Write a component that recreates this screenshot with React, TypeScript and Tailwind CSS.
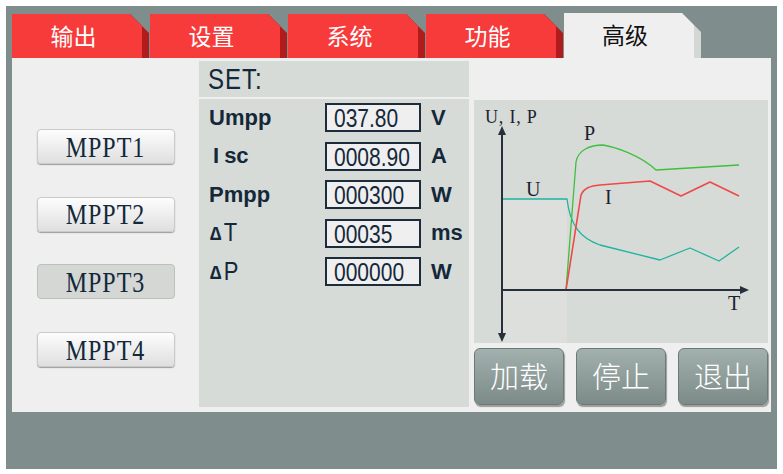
import React from "react";

const TABS = [
  { label: "输出", active: false },
  { label: "设置", active: false },
  { label: "系统", active: false },
  { label: "功能", active: false },
  { label: "高级", active: true },
];

const MPPTS = [
  { label: "MPPT1", selected: false },
  { label: "MPPT2", selected: false },
  { label: "MPPT3", selected: true },
  { label: "MPPT4", selected: false },
];

const ROWS = [
  { label: "Umpp", value: "037.80", unit: "V" },
  { label: "Isc", value: "0008.90", unit: "A" },
  { label: "Pmpp", value: "000300", unit: "W" },
  { label: "∆T", value: "00035", unit: "ms" },
  { label: "∆P", value: "000000", unit: "W" },
];

const CJK = "font-['Noto_Sans_CJK_SC',sans-serif]";

function Tab(props: { label: string; active: boolean }) {
  const { label, active } = props;
  return (
    <div
      className={
        active
          ? "h-[45px] w-[137px] bg-[#d3d8d5] [clip-path:polygon(0_0,118px_0,137px_19px,137px_100%,0_100%)]"
          : "mt-[1px] h-[44px] w-[137px] bg-[#b21b1b] [clip-path:polygon(0_0,118px_0,137px_19px,137px_100%,0_100%)]"
      }
    >
      <div
        className={
          active
            ? `flex h-full w-[130px] items-center justify-center bg-[#efefef] pb-[3px] pr-[8px] text-[23px] text-[#111] ${CJK} [clip-path:polygon(0_0,118px_0,130px_12px,130px_100%,0_100%)]`
            : `flex h-full w-[130px] items-center justify-center bg-[#f73a3a] pb-[2px] pr-[7px] text-[23px] text-white ${CJK} [clip-path:polygon(0_0,118px_0,130px_12px,130px_100%,0_100%)]`
        }
      >
        {label}
      </div>
    </div>
  );
}

function MpptButton(props: { label: string; selected: boolean }) {
  const { label, selected } = props;
  return (
    <div
      className={
        selected
          ? "flex h-[35px] w-[138px] items-center justify-center rounded-[4px] border border-[#bcc0bc] bg-[#d4d7d4] font-['Liberation_Serif',serif] text-[24px] tracking-[1px] text-[#13283a]"
          : "flex h-[35px] w-[138px] items-center justify-center rounded-[4px] border border-[#c9cbc9] bg-gradient-to-b from-[#fdfdfd] to-[#dedfde] font-['Liberation_Serif',serif] text-[24px] tracking-[1px] text-[#13283a] shadow-[0_1px_1px_rgba(0,0,0,0.35)]"
      }
    >
      <span className="inline-block scale-y-[1.2]">{label}</span>
    </div>
  );
}

function ParamRow(props: { label: string; value: string; unit: string }) {
  const { label, value, unit } = props;
  return (
    <div className="flex h-[29px] items-center font-['Liberation_Sans',sans-serif] text-[#14283a]">
      <div className="w-[116px] text-[22px] font-bold leading-none">
        {label === "Isc" ? (
          <span className="pl-[4px]">
            I<span className="ml-[5px]">sc</span>
          </span>
        ) : label.startsWith("∆") ? (
          <span className="pl-[1px] font-normal">
            <span className="mr-[2px] text-[19px] font-bold">∆</span>
            <span className="inline-block scale-y-[1.15]">{label.slice(1)}</span>
          </span>
        ) : (
          label
        )}
      </div>
      <div className="flex h-[29px] w-[96px] items-center border-2 border-[#1d2c3b] bg-[#efefef] pl-[7px] text-[21px] leading-none">
        <span className="inline-block scale-y-[1.25]">{value}</span>
      </div>
      <div className="ml-[10px] text-[22px] font-bold leading-none">{unit}</div>
    </div>
  );
}

function Chart() {
  return (
    <svg width="294" height="243" viewBox="474 100 294 243" className="block">
      <rect x="502" y="199" width="65" height="144" fill="#dcdfdc" />
      <g fill="none" strokeWidth="1.3" strokeLinejoin="round">
        <path d="M502 199 H567 C570 225 580 238 600 245 L660 260 L690 248 L719 261 L739 247" stroke="#1eb3a0" />
        <path d="M566 290 L576 162 C578 150 590 145 603 145 C615 147 640 155 656 170 L739 165" stroke="#3fbf3f" />
        <path d="M566 290 L581 195 C584 188 590 186 600 185 L650 181 L681 196 L710 182 L739 196" stroke="#f04848" strokeWidth="1.6" />
      </g>
      <g stroke="#26303a" strokeWidth="2">
        <line x1="502" y1="132" x2="502" y2="336" />
        <line x1="502" y1="290" x2="743" y2="290" />
      </g>
      <g fill="#26303a">
        <polygon points="502,126 498,135 506,135" />
        <polygon points="502,342 498,333 506,333" />
        <polygon points="749,290 740,286 740,294" />
      </g>
      <g fill="#1a2230" fontFamily="'Liberation Serif', serif">
        <text x="485" y="123" fontSize="18" letterSpacing="0.8">U, I, P</text>
        <text x="584" y="140" fontSize="20">P</text>
        <text x="526" y="196" fontSize="20">U</text>
        <text x="605" y="204" fontSize="20">I</text>
        <text x="728" y="310" fontSize="20">T</text>
      </g>
    </svg>
  );
}

function ActionButton(props: { label: string }) {
  return (
    <div
      className={`flex h-[57px] w-[90px] items-center justify-center rounded-[6px] border border-[#6c7a77] bg-gradient-to-b from-[#a3b1ae] to-[#7d8b88] pb-[2px] text-[29px] font-light text-white shadow-[1px_2px_1px_rgba(0,0,0,0.35)] ${CJK}`}
    >
      {props.label}
    </div>
  );
}

export default function App() {
  return (
    <div className="h-[474px] w-[783px] bg-white pl-[6px] pt-[6px]">
      <div className="flex h-[463px] w-[771px] flex-col bg-[#7f8d8c] pl-[6px] pt-[7px]">
        <div className="flex gap-[1px]">
          {TABS.map((t) => (
            <Tab key={t.label} label={t.label} active={t.active} />
          ))}
        </div>

        <div className="flex h-[354px] w-[759px] bg-[#efefef] pb-[5px] pt-[3px]">
          <div className="flex w-[187px] flex-col items-center gap-[32.7px] pt-[68px]">
            {MPPTS.map((m) => (
              <MpptButton key={m.label} label={m.label} selected={m.selected} />
            ))}
          </div>

          <div className="flex w-[270px] flex-col gap-[2px]">
            <div className="flex h-[36px] items-center bg-[#d6dbd7] pl-[9px] font-['Liberation_Sans',sans-serif] text-[24px] tracking-[1px] text-[#13283a]">
              <span className="inline-block scale-y-[1.25]">SET:</span>
            </div>
            <div className="flex flex-1 flex-col gap-[9.5px] bg-[#d6dbd7] pl-[10px] pt-[4px]">
              {ROWS.map((r) => (
                <ParamRow key={r.label} label={r.label} value={r.value} unit={r.unit} />
              ))}
            </div>
          </div>

          <div className="ml-[5px] flex w-[294px] flex-col pt-[39px]">
            <div className="bg-[#d6dbd7]">
              <Chart />
            </div>
            <div className="mt-[5px] flex justify-between">
              <ActionButton label="加载" />
              <ActionButton label="停止" />
              <ActionButton label="退出" />
            </div>
          </div>
        </div>
      </div>
    </div>
  );
}
